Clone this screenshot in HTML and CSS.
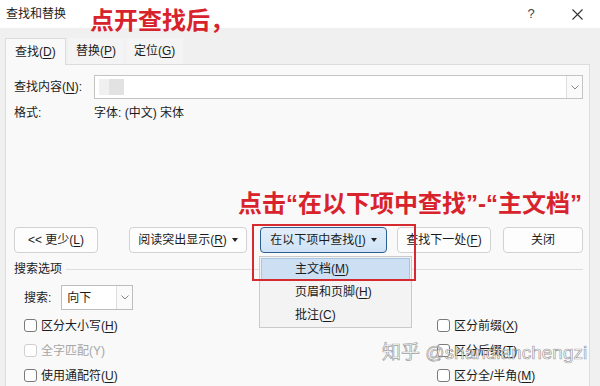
FILE: index.html
```html
<!DOCTYPE html>
<html lang="zh-CN">
<head>
    <meta charset="UTF-8">
    <title>查找和替换</title>
    <link rel="stylesheet" href="styles.css">
</head>
<body>
    <div class="titlebar">
        <span class="title">查找和替换</span>
        <span class="caption-btn help">?</span>
        <span class="caption-btn">
            <svg width="11" height="11" viewBox="0 0 11 11"><path d="M0.5 0.5L10.5 10.5M10.5 0.5L0.5 10.5" stroke="#333" stroke-width="1.1" fill="none"/></svg>
        </span>
    </div>
    <div class="note note-top">点开查找后，</div>

    <div class="tabs">
        <div class="tab active"><span>查找(<u>D</u>)</span></div>
        <div class="tab"><span>替换(<u>P</u>)</span></div>
        <div class="tab"><span>定位(<u>G</u>)</span></div>
    </div>

    <div class="panel">
        <div class="field-row">
            <span class="field-label">查找内容(<u>N</u>):</span>
            <div class="combo">
                <span class="combo-text"><span class="redacted"></span></span>
                <span class="combo-arrow">
                    <svg width="8" height="5" viewBox="0 0 8 5"><path d="M0.5 0.5L4 4L7.5 0.5" stroke="#888" fill="none"/></svg>
                </span>
            </div>
        </div>
        <div class="format-row">
            <span class="field-label">格式:</span>
            <span>字体: (中文) 宋体</span>
        </div>

        <div class="note-row"><span class="note">点击“在以下项中查找”-“主文档”</span></div>

        <div class="button-row">
            <div class="btn b-less"><span>&lt;&lt; 更少(<u>L</u>)</span></div>
            <div class="btn b-read"><span>阅读突出显示(<u>R</u>)</span><span class="caret"></span></div>
            <div class="btn b-in pressed"><span>在以下项中查找(<u>I</u>)</span><span class="caret"></span></div>
            <div class="btn b-next"><span>查找下一处(<u>F</u>)</span></div>
            <div class="btn b-close"><span>关闭</span></div>
        </div>

        <div class="section-title"><span>搜索选项</span><span class="rule"></span></div>

        <div class="direction">
            <span>搜索:</span>
            <div class="select">
                <span class="select-text">向下</span>
                <span class="combo-arrow">
                    <svg width="8" height="5" viewBox="0 0 8 5"><path d="M0.5 0.5L4 4L7.5 0.5" stroke="#888" fill="none"/></svg>
                </span>
            </div>
        </div>

        <div class="options">
            <div class="col-left">
                <label class="check"><span class="box"></span><span>区分大小写(<u>H</u>)</span></label>
                <label class="check disabled"><span class="box"></span><span>全字匹配(Y)</span></label>
                <label class="check"><span class="box"></span><span>使用通配符(<u>U</u>)</span></label>
            </div>
            <div class="col-right">
                <label class="check"><span class="box"></span><span>区分前缀(<u>X</u>)</span></label>
                <label class="check"><span class="box"></span><span>区分后缀(<u>T</u>)</span></label>
                <label class="check"><span class="box"></span><span>区分全/半角(<u>M</u>)</span></label>
            </div>
        </div>

        <!-- 弹出菜单和红框 -->
        <div class="menu">
            <div class="menu-item hover"><span>主文档(<u>M</u>)</span></div>
            <div class="menu-item"><span>页眉和页脚(<u>H</u>)</span></div>
            <div class="menu-item"><span>批注(<u>C</u>)</span></div>
        </div>
        <div class="red-box"></div>
    </div>

    <div class="watermark">知乎 @shandianchengzi</div>
</body>
</html>
```

FILE: styles.css
```css
body {
    margin: 0;
    width: 600px;
    height: 386px;
    overflow: hidden;
    position: relative;
    background: #f0f0f0;
    font-family: "Liberation Sans", "Noto Sans CJK SC", sans-serif;
    font-size: 12px;
    line-height: 16px;
    color: #1b1b1b;
}
u {
    text-decoration-thickness: 1px;
    text-underline-offset: 2px;
}
.titlebar {
    height: 28px;
    background: #fff;
    display: flex;
    align-items: center;
    padding-left: 6px;
}
.title {
    flex: 1;
}
.caption-btn {
    width: 46px;
    height: 28px;
    display: flex;
    align-items: center;
    justify-content: center;
}
.help {
    font-size: 13px;
    color: #444;
}
.note {
    color: #d8232c;
    font-weight: bold;
    font-size: 24px;
    line-height: 30px;
}
.note-top {
    position: absolute;
    left: 90px;
    top: 6px;
}
.tabs {
    display: flex;
    margin: 10px 0 0 5px;
    height: 26px;
}
.tab {
    padding: 0 8px;
    display: flex;
    align-items: center;
    background: #f4f4f4;
    margin-right: 2px;
}
.tab.active {
    width: 61px;
    box-sizing: border-box;
    padding-left: 9px;
    background: #f9f9f9;
    border: 1px solid #dcdcdc;
    border-bottom: none;
    position: relative;
    z-index: 1;
    height: 27px;
}
.panel {
    position: relative;
    width: 585px;
    height: 330px;
    box-sizing: border-box;
    margin-left: 5px;
    background: #f9f9f9;
    border: 1px solid #dcdcdc;
    padding: 10px 6px 0 8px;
}
.field-row {
    display: flex;
    align-items: center;
    height: 24px;
}
.field-label {
    width: 80px;
    flex: none;
}
.combo {
    flex: 1;
    height: 24px;
    box-sizing: border-box;
    display: flex;
    background: #fff;
    border: 1px solid #c4c4c4;
}
.combo-text {
    flex: 1;
    display: flex;
    align-items: center;
    padding-left: 4px;
}
.redacted {
    width: 25px;
    height: 16px;
    background: linear-gradient(90deg, #f0f0f0 0 40%, #e2e2e2 40% 100%);
}
.combo-arrow {
    width: 15px;
    border-left: 1px solid #dedede;
    background: #fafafa;
    display: flex;
    align-items: center;
    justify-content: center;
}
.format-row {
    display: flex;
    margin-top: 5px;
    height: 18px;
    align-items: center;
}
.note-row {
    margin-top: 67px;
    padding-left: 224px;
    height: 30px;
    white-space: nowrap;
}
.button-row {
    display: flex;
    margin-top: 8px;
    height: 26px;
}
.btn {
    box-sizing: border-box;
    height: 26px;
    display: flex;
    align-items: center;
    justify-content: center;
    gap: 5px;
    background: #fdfdfd;
    border: 1px solid #d2d2d2;
    border-radius: 4px;
    white-space: nowrap;
}
.b-less { width: 84px; }
.b-read { width: 118px; margin-left: 31px; }
.b-in { width: 127px; margin-left: 13px; }
.b-next { width: 94px; margin-left: 10px; }
.b-close { width: 80px; margin-left: 12px; }
.pressed {
    background: linear-gradient(#e2eefa, #cfe3f6);
    border-color: #2b5f8f;
}
.caret {
    width: 0;
    height: 0;
    border-left: 3px solid transparent;
    border-right: 3px solid transparent;
    border-top: 4px solid #222;
}
.section-title {
    display: flex;
    align-items: center;
    margin-top: 8px;
    height: 16px;
}
.rule {
    flex: 1;
    height: 1px;
    background: #dedede;
    margin-left: 4px;
}
.direction {
    display: flex;
    align-items: center;
    margin-top: 8px;
    padding-left: 10px;
    height: 25px;
}
.select {
    margin-left: 10px;
    width: 72px;
    height: 25px;
    box-sizing: border-box;
    display: flex;
    background: #fff;
    border: 1px solid #bdbdbd;
}
.select-text {
    flex: 1;
    display: flex;
    align-items: center;
    padding-left: 5px;
}
.options {
    display: grid;
    grid-template-columns: 423px 1fr;
    margin-top: 3px;
}
.col-left {
    padding-left: 10px;
}
.check {
    display: flex;
    align-items: center;
    height: 25px;
    gap: 4px;
}
.box {
    width: 13px;
    height: 13px;
    box-sizing: border-box;
    border: 1px solid #7a7a7a;
    border-radius: 3px;
    background: #fff;
}
.check.disabled {
    color: #a6a6a6;
}
.check.disabled .box {
    border-color: #cfcfcf;
}
.menu {
    position: absolute;
    left: 253px;
    top: 191px;
    width: 153px;
    box-sizing: border-box;
    padding: 1px;
    background: #f3f3f3;
    border: 1px solid #cacaca;
}
.menu-item {
    height: 23px;
    box-sizing: border-box;
    display: flex;
    align-items: center;
    padding-left: 33px;
    border: 1px solid transparent;
}
.menu-item.hover {
    height: 22px;
    background: #cde0f3;
    border-color: #a9c5e4;
}
.red-box {
    position: absolute;
    left: 246px;
    top: 159px;
    width: 164px;
    height: 57px;
    box-sizing: border-box;
    border: 2.5px solid #d62a31;
}
.watermark {
    position: absolute;
    left: 382px;
    top: 341px;
    font-size: 19px;
    line-height: 24px;
    color: rgba(255, 255, 255, 0.75);
    -webkit-text-stroke: 0.7px rgba(90, 90, 90, 0.6);
    white-space: nowrap;
}
```
